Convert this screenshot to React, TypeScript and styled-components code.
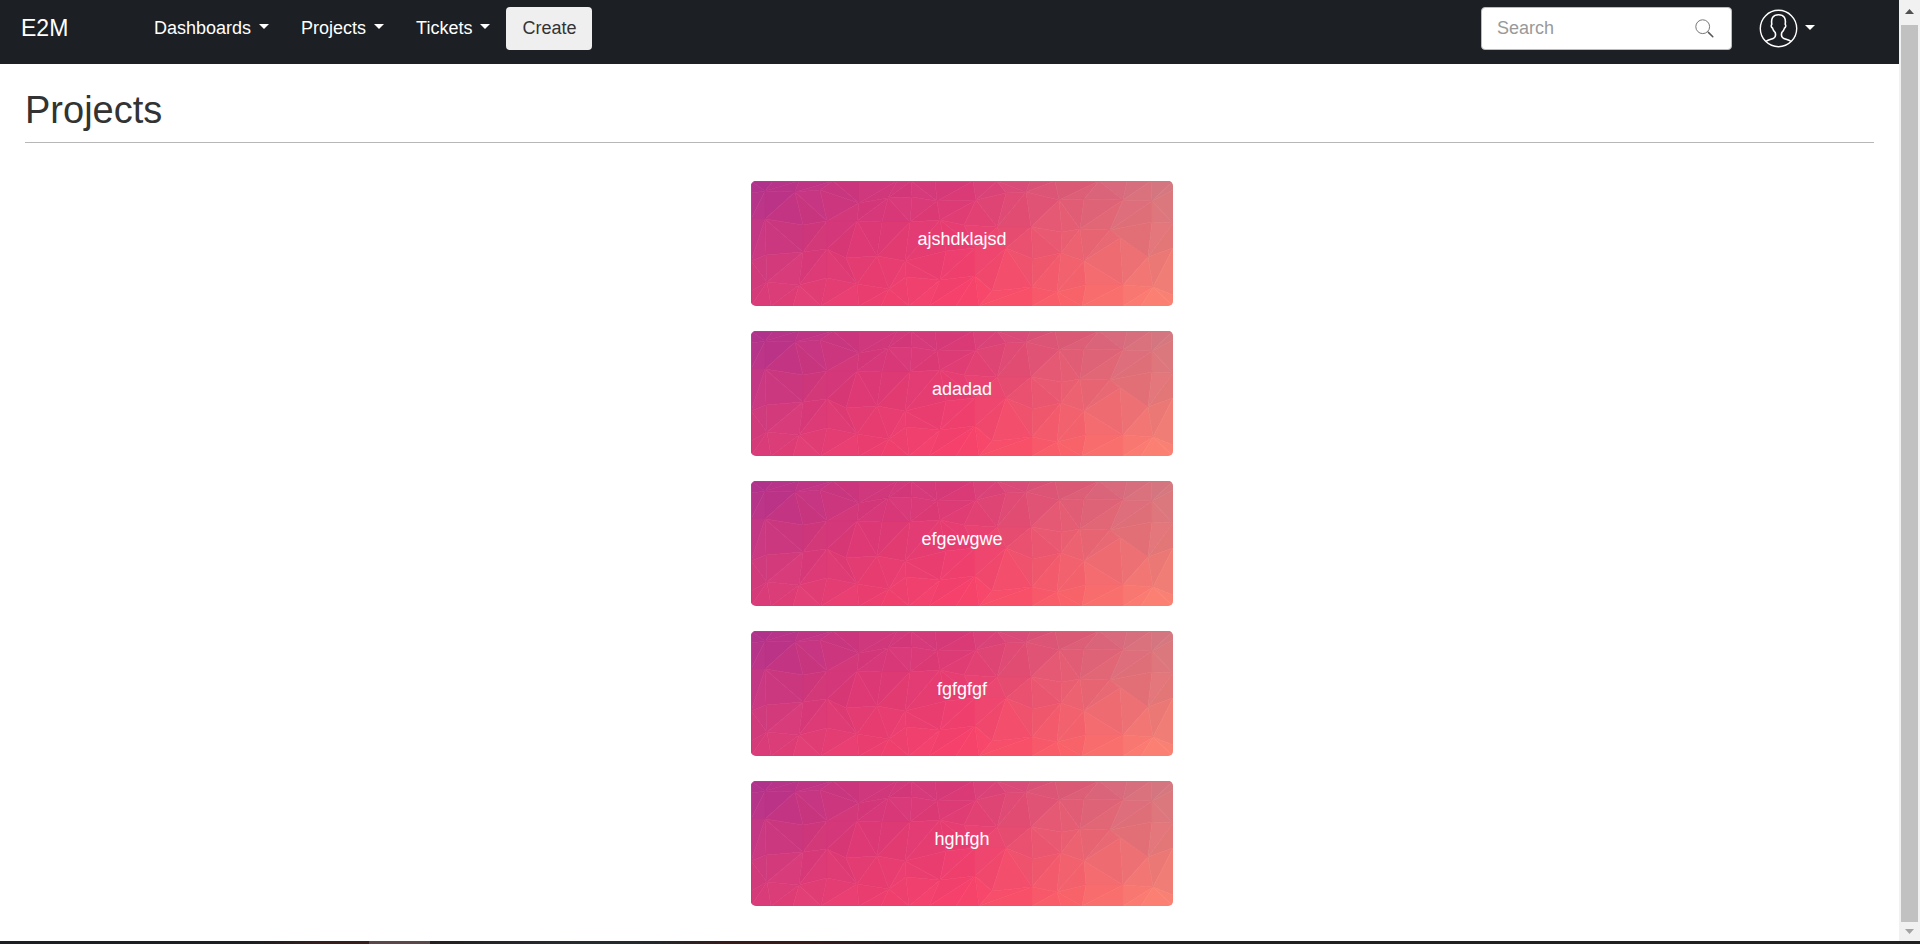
import React from "react";
import styled, { createGlobalStyle } from "styled-components";

const GlobalStyle = createGlobalStyle`
  *, *::before, *::after { box-sizing: border-box; }
  body {
    margin: 0;
    background: #fff;
    color: #333;
    font: 18px/24px "Liberation Sans", Arial, sans-serif;
  }
  button, input { font: inherit; }
`;

const Screen = styled.div`
  display: flex;
  flex-direction: column;
  min-height: 100vh;
`;

const Viewport = styled.div`
  display: flex;
  flex: 1;
`;

const Page = styled.div`
  flex: 1;
  min-width: 0;
`;

const Navbar = styled.header`
  display: flex;
  align-items: flex-start;
  height: 64px;
  padding: 7px 84px 0 21px;
  background: #1c1f24;
`;

const Brand = styled.a`
  width: 117px;
  color: #fff;
  font-size: 23px;
  line-height: 43px;
  text-decoration: none;
`;

const Menu = styled.nav`
  display: flex;
  flex: 1;
`;

const MenuButton = styled.button`
  display: flex;
  align-items: center;
  gap: 8px;
  height: 43px;
  padding: 0 16px 2px;
  border: 0;
  background: none;
  color: #fff;
`;

const Caret = styled.span`
  border: 5px solid transparent;
  border-top-color: #fff;
  border-bottom: 0;
  margin-bottom: 2px;
`;

const CreateButton = styled.button`
  height: 43px;
  padding: 0 16px 2px;
  border: 0;
  border-radius: 4px;
  background: #efefef;
  color: #333;
`;

const SearchBox = styled.label`
  display: flex;
  align-items: center;
  width: 251px;
  height: 43px;
  margin-right: 27px;
  padding: 0 17px 0 15px;
  border: 1px solid #bbb;
  border-radius: 4px;
  background: #fff;
`;

const SearchInput = styled.input`
  flex: 1;
  min-width: 0;
  padding: 0 0 2px;
  border: 0;
  outline: 0;
  background: none;
  color: #333;
  &::placeholder { color: #999; opacity: 1; }
`;

const ProfileButton = styled.button`
  display: flex;
  align-items: center;
  gap: 7px;
  height: 43px;
  padding: 0;
  border: 0;
  background: none;
`;

const Main = styled.main`
  padding: 24px 25px 35px;
`;

const Title = styled.h1`
  margin: 0 0 38px;
  padding-bottom: 10px;
  border-bottom: 1px solid #b7b7b7;
  font-size: 38px;
  font-weight: 400;
  line-height: 44px;
`;

const ProjectList = styled.ul`
  display: flex;
  flex-direction: column;
  align-items: center;
  gap: 25px;
  margin: 0;
  padding: 0 0 0 25px;
  list-style: none;
`;

const ProjectItem = styled.li`
  width: 422px;
  max-width: 100%;
`;

const ProjectCard = styled.a`
  position: relative;
  display: flex;
  align-items: center;
  justify-content: center;
  height: 125px;
  padding-bottom: 10px;
  overflow: hidden;
  border-radius: 5px;
  color: #fff;
  text-decoration: none;
`;

const CardArt = styled.svg`
  position: absolute;
  inset: 0;
  width: 100%;
  height: 100%;
`;

const CardName = styled.span`
  position: relative;
`;

const Scrollbar = styled.div`
  display: flex;
  flex-direction: column;
  align-items: center;
  width: 21px;
  padding: 9px 0 7px;
  background: #f1f1f1;
`;

const ScrollThumb = styled.div`
  flex: 1;
  width: 17px;
  margin: 11px 0 7px;
  background: #c1c1c1;
`;

const TaskbarEdge = styled.div`
  height: 3px;
  background: linear-gradient(
    90deg,
    #1c1f21 0 13%, #381d1e 17% 19.2%, #5a474a 19.2% 22.4%, #241f22 22.4%,
    #262b2f 30%, #23282b 34%, #381a1b 38% 42%, #1e2022 47% 100%
  );
`;

type Point = [number, number];
type Rgb = [number, number, number];

const mesh: Point[][] = [
  [[0, 0], [22, 0], [48, 0], [82, 0], [108, 0], [146, 0], [160, 0], [184, 0], [222, 0], [246, 0], [279, 0], [304, 0], [348, 0], [376, 0], [400, 0], [422, 0]],
  [[0, 12], [14, 10], [44, 11], [69, 9], [108, 22], [137, 17], [161, 16], [186, 20], [225, 19], [255, 12], [275, 11], [308, 19], [333, 18], [372, 19], [401, 20], [422, 9]],
  [[0, 38], [14, 38], [52, 44], [76, 40], [106, 40], [131, 41], [159, 41], [189, 39], [213, 44], [246, 46], [280, 46], [311, 51], [329, 48], [359, 49], [401, 41], [422, 42]],
  [[0, 80], [15, 74], [52, 71], [76, 68], [95, 77], [126, 75], [154, 80], [195, 70], [224, 67], [255, 67], [282, 78], [310, 72], [333, 80], [369, 57], [397, 76], [422, 67]],
  [[0, 110], [16, 101], [48, 104], [76, 97], [106, 103], [138, 108], [155, 96], [189, 99], [224, 95], [241, 110], [281, 106], [306, 111], [335, 104], [372, 104], [402, 106], [422, 114]],
  [[0, 125], [20, 125], [42, 125], [70, 125], [108, 125], [130, 125], [158, 125], [178, 125], [205, 125], [228, 125], [281, 125], [310, 125], [331, 125], [372, 125], [390, 125], [422, 125]],
];

const tones: Rgb[][] = [
  [[174, 50, 142], [203, 54, 127], [214, 58, 121], [218, 90, 120], [211, 122, 130]],
  [[198, 56, 130], [220, 56, 116], [234, 62, 112], [234, 94, 112], [228, 122, 122]],
  [[217, 60, 120], [236, 64, 112], [249, 66, 106], [251, 98, 104], [253, 134, 116]],
];

const mix = (a: Rgb, b: Rgb, t: number): Rgb =>
  [0, 1, 2].map((i) => a[i] + (b[i] - a[i]) * t) as Rgb;

const toneAt = (x: number, y: number): Rgb => {
  const u = (x / 422) * 4;
  const v = (y / 125) * 2;
  const i = Math.min(3, Math.floor(u));
  const j = Math.min(1, Math.floor(v));
  return mix(mix(tones[j][i], tones[j][i + 1], u - i), mix(tones[j + 1][i], tones[j + 1][i + 1], u - i), v - j);
};

const facet = (corners: Point[], seed: number) => {
  const x = corners.reduce((sum, p) => sum + p[0], 0) / 3;
  const y = corners.reduce((sum, p) => sum + p[1], 0) / 3;
  const shade = (((seed * 37) % 11) - 5) * 0.25;
  const fill = `rgb(${toneAt(x, y).map((c) => Math.round(c + shade)).join(",")})`;
  return { points: corners.map((p) => p.join(",")).join(" "), fill };
};

const facets = mesh.slice(0, -1).flatMap((row, r) =>
  row.slice(0, -1).flatMap((a, c) => {
    const b = row[c + 1];
    const d = mesh[r + 1][c];
    const e = mesh[r + 1][c + 1];
    const seed = r * 31 + c * 2;
    return (r + c) % 3 === 0
      ? [facet([a, b, e], seed), facet([a, e, d], seed + 1)]
      : [facet([a, b, d], seed), facet([b, e, d], seed + 1)];
  })
);

const PolygonArt = () => (
  <CardArt viewBox="0 0 422 125" preserveAspectRatio="none" aria-hidden="true">
    <defs>
      <linearGradient id="edge" x1="0" x2="1" y1="0" y2="0">
        <stop offset="0" stopColor="#7a4fa8" />
        <stop offset="1" stopColor="#9a8f9c" />
      </linearGradient>
    </defs>
    {facets.map((f, i) => (
      <polygon key={i} points={f.points} fill={f.fill} stroke={f.fill} strokeWidth="0.6" />
    ))}
    <rect width="422" height="1" fill="url(#edge)" />
    <rect width="1" height="125" fill="#8a50a4" />
  </CardArt>
);

const SearchIcon = () => (
  <svg width="19" height="19" viewBox="0 0 19 19" fill="none" aria-hidden="true">
    <circle cx="7.7" cy="7.7" r="6.9" stroke="#777" strokeWidth="1" />
    <path d="M12.6 12.6l1.2 1.2" stroke="#666" strokeWidth="1" />
    <path d="M13.4 13.4l4.4 4.4" stroke="#555" strokeWidth="1.5" strokeLinecap="round" />
  </svg>
);

const ProfileIcon = () => (
  <svg width="39" height="39" viewBox="0 0 39 39" fill="none" stroke="#fff" strokeWidth="1.6" aria-hidden="true">
    <circle cx="19.5" cy="19.5" r="18.2" strokeWidth="1.4" />
    <path d="M7 32.4c2.500-1.500 5.400-2.100 7.600-3.100 2.200-1.100 2.200-3.600 1.600-5.800-1.400-1.400-2.200-2.600-2.700-4.400-1.300-.6-1.600-3-.7-3.900-.9-5.600.9-9.500 6.700-9.500s7.600 3.900 6.700 9.500c.9.9.6 3.300-.7 3.900-.5 1.800-1.300 3-2.700 4.400-.6 2.200-.6 4.700 1.600 5.800 2.200 1 5.100 1.600 7.600 3.100" />
  </svg>
);

const ScrollArrow = ({ down, color }: { down?: boolean; color: string }) => (
  <svg width="9" height="5" viewBox="0 0 9 5" fill={color} aria-hidden="true">
    <path d={down ? "M0 0h9L4.500 5z" : "M0 5h9L4.500 0z"} />
  </svg>
);

const menus = ["Dashboards", "Projects", "Tickets"];
const projects = ["ajshdklajsd", "adadad", "efgewgwe", "fgfgfgf", "hghfgh"];

export default function App() {
  return (
    <Screen>
      <GlobalStyle />
      <Viewport>
        <Page>
          <Navbar>
            <Brand href="#">E2M</Brand>
            <Menu>
              {menus.map((name) => (
                <MenuButton key={name} type="button">
                  {name}
                  <Caret />
                </MenuButton>
              ))}
              <CreateButton type="button">Create</CreateButton>
            </Menu>
            <SearchBox>
              <SearchInput type="text" placeholder="Search" aria-label="Search" />
              <SearchIcon />
            </SearchBox>
            <ProfileButton type="button" aria-label="Profile">
              <ProfileIcon />
              <Caret />
            </ProfileButton>
          </Navbar>
          <Main>
            <Title>Projects</Title>
            <ProjectList>
              {projects.map((name) => (
                <ProjectItem key={name}>
                  <ProjectCard href="#">
                    <PolygonArt />
                    <CardName>{name}</CardName>
                  </ProjectCard>
                </ProjectItem>
              ))}
            </ProjectList>
          </Main>
        </Page>
        <Scrollbar>
          <ScrollArrow color="#505050" />
          <ScrollThumb />
          <ScrollArrow down color="#a3a3a3" />
        </Scrollbar>
      </Viewport>
      <TaskbarEdge />
    </Screen>
  );
}
